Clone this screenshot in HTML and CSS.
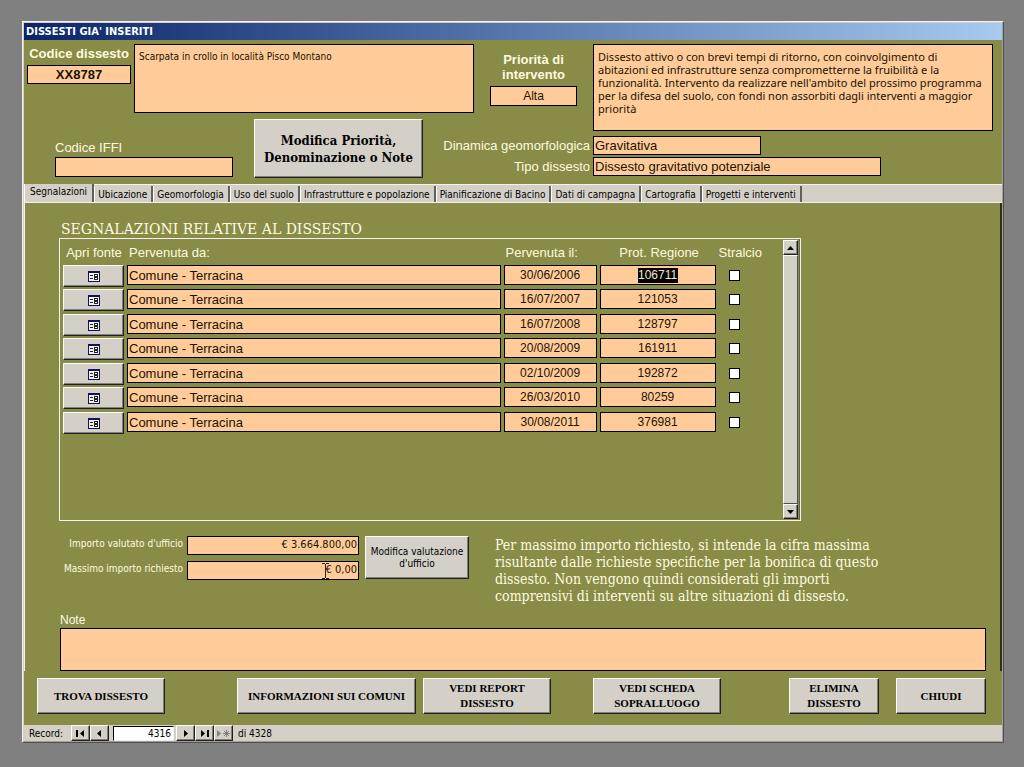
FILE: index.html
```html
<!DOCTYPE html>
<html lang="it">
<head>
<meta charset="utf-8">
<title>Dissesti già inseriti</title>
<link rel="stylesheet" href="styles.css">
</head>
<body>
<svg class="defs" aria-hidden="true">
  <symbol id="form-icon" viewBox="0 0 12 11">
    <path fill="#f4f2ec" d="M0 0h12v11H0z"/>
    <path fill="#101060" d="M0 0h12v2H0zM0 0h1v11H0zM11 0h1v11h-1zM0 10h12v1H0z"/>
    <path fill="#222" d="M2 4h3v1H2zM2 7h3v1H2zM6 3h4v3H6zM6 6h4v3H6z"/>
    <path fill="#fff" d="M7 4h2v1H7zM7 7h2v1H7z"/>
  </symbol>
</svg>
<main class="window">
  <h1 class="titlebar">DISSESTI GIA' INSERITI</h1>

  <section class="header">
    <div class="ident">
      <div class="code">
        <label class="strong-label" for="codice">Codice dissesto</label>
        <input class="field code-field" id="codice" value="XX8787">
      </div>
      <textarea class="field description" aria-label="Denominazione">Scarpata in crollo in località Pisco Montano</textarea>
    </div>
    <div class="priority">
      <label class="strong-label" for="priorita">Priorità di<br>intervento</label>
      <input class="field priority-field" id="priorita" value="Alta">
    </div>
    <textarea class="field priority-text" aria-label="Descrizione priorità">Dissesto attivo o con brevi tempi di ritorno, con coinvolgimento di
abitazioni ed infrastrutture senza comprometterne la fruibilità e la
funzionalità. Intervento da realizzare nell'ambito del prossimo programma
per la difesa del suolo, con fondi non assorbiti dagli interventi a maggior
priorità</textarea>
    <div class="iffi-row">
      <div class="iffi">
        <label class="label" for="iffi">Codice IFFI</label>
        <input class="field" id="iffi">
      </div>
      <button class="btn edit-main">Modifica Priorità,<br>Denominazione o Note</button>
    </div>
    <div class="types">
      <label class="label" for="dinamica">Dinamica geomorfologica</label>
      <input class="field dynamics" id="dinamica" value="Gravitativa">
      <label class="label" for="tipo">Tipo dissesto</label>
      <input class="field kind" id="tipo" value="Dissesto gravitativo potenziale">
    </div>
  </section>

  <nav class="tabs">
    <button class="tab active">Segnalazioni</button>
    <button class="tab">Ubicazione</button>
    <button class="tab">Geomorfologia</button>
    <button class="tab">Uso del suolo</button>
    <button class="tab">Infrastrutture e popolazione</button>
    <button class="tab">Pianificazione di Bacino</button>
    <button class="tab">Dati di campagna</button>
    <button class="tab">Cartografia</button>
    <button class="tab">Progetti e interventi</button>
  </nav>

  <section class="panel">
    <h2 class="heading">SEGNALAZIONI RELATIVE AL DISSESTO</h2>
    <div class="subform">
      <table class="reports">
        <colgroup><col class="c-open"><col class="c-from"><col class="c-date"><col class="c-prot"><col class="c-check"></colgroup>
        <thead>
          <tr><th class="center">Apri fonte</th><th class="inset">Pervenuta da:</th><th class="inset">Pervenuta il:</th><th class="center">Prot. Regione</th><th>Stralcio</th></tr>
        </thead>
        <tbody>
          <tr><td><button class="btn open" aria-label="Apri fonte"><svg class="form-icon"><use href="#form-icon"/></svg></button></td><td><input class="field" aria-label="Pervenuta da" value="Comune - Terracina"></td><td><input class="field num" aria-label="Pervenuta il" value="30/06/2006"></td><td><input class="field num selected" aria-label="Prot. Regione" value="106711"></td><td><input class="check" type="checkbox" aria-label="Stralcio"></td></tr>
          <tr><td><button class="btn open" aria-label="Apri fonte"><svg class="form-icon"><use href="#form-icon"/></svg></button></td><td><input class="field" aria-label="Pervenuta da" value="Comune - Terracina"></td><td><input class="field num" aria-label="Pervenuta il" value="16/07/2007"></td><td><input class="field num" aria-label="Prot. Regione" value="121053"></td><td><input class="check" type="checkbox" aria-label="Stralcio"></td></tr>
          <tr><td><button class="btn open" aria-label="Apri fonte"><svg class="form-icon"><use href="#form-icon"/></svg></button></td><td><input class="field" aria-label="Pervenuta da" value="Comune - Terracina"></td><td><input class="field num" aria-label="Pervenuta il" value="16/07/2008"></td><td><input class="field num" aria-label="Prot. Regione" value="128797"></td><td><input class="check" type="checkbox" aria-label="Stralcio"></td></tr>
          <tr><td><button class="btn open" aria-label="Apri fonte"><svg class="form-icon"><use href="#form-icon"/></svg></button></td><td><input class="field" aria-label="Pervenuta da" value="Comune - Terracina"></td><td><input class="field num" aria-label="Pervenuta il" value="20/08/2009"></td><td><input class="field num" aria-label="Prot. Regione" value="161911"></td><td><input class="check" type="checkbox" aria-label="Stralcio"></td></tr>
          <tr><td><button class="btn open" aria-label="Apri fonte"><svg class="form-icon"><use href="#form-icon"/></svg></button></td><td><input class="field" aria-label="Pervenuta da" value="Comune - Terracina"></td><td><input class="field num" aria-label="Pervenuta il" value="02/10/2009"></td><td><input class="field num" aria-label="Prot. Regione" value="192872"></td><td><input class="check" type="checkbox" aria-label="Stralcio"></td></tr>
          <tr><td><button class="btn open" aria-label="Apri fonte"><svg class="form-icon"><use href="#form-icon"/></svg></button></td><td><input class="field" aria-label="Pervenuta da" value="Comune - Terracina"></td><td><input class="field num" aria-label="Pervenuta il" value="26/03/2010"></td><td><input class="field num" aria-label="Prot. Regione" value="80259"></td><td><input class="check" type="checkbox" aria-label="Stralcio"></td></tr>
          <tr><td><button class="btn open" aria-label="Apri fonte"><svg class="form-icon"><use href="#form-icon"/></svg></button></td><td><input class="field" aria-label="Pervenuta da" value="Comune - Terracina"></td><td><input class="field num" aria-label="Pervenuta il" value="30/08/2011"></td><td><input class="field num" aria-label="Prot. Regione" value="376981"></td><td><input class="check" type="checkbox" aria-label="Stralcio"></td></tr>
        </tbody>
      </table>
      <div class="scrollbar">
        <button class="btn scroll-btn" aria-label="Su"><svg width="7" height="4" viewBox="0 0 7 4"><path d="M0 4L3.500 0 7 4z"/></svg></button>
        <div class="thumb"></div>
        <button class="btn scroll-btn" aria-label="Giù"><svg width="7" height="4" viewBox="0 0 7 4"><path d="M0 0h7L3.500 4z"/></svg></button>
      </div>
    </div>

    <div class="amounts">
      <div class="amount-grid">
        <label class="small-label" for="valutato">Importo valutato d'ufficio</label>
        <input class="field amount" id="valutato" value="€ 3.664.800,00">
        <label class="small-label" for="massimo">Massimo importo richiesto</label>
        <div class="amount-wrap">
          <input class="field amount" id="massimo" value="€ 0,00">
          <svg class="ibeam" width="7" height="16" viewBox="0 0 7 16"><path d="M0 .5h3M4 .5h3M3.500 1v14M0 15.500h3M4 15.500h3" stroke="#223" fill="none"/></svg>
        </div>
      </div>
      <button class="btn edit-amount">Modifica valutazione<br>d'ufficio</button>
      <p class="hint">Per massimo importo richiesto, si intende la cifra massima<br>risultante dalle richieste specifiche per la bonifica di questo<br>dissesto. Non vengono quindi considerati gli importi<br>comprensivi di interventi su altre situazioni di dissesto.</p>
    </div>

    <div class="notes">
      <label class="note-label" for="note">Note</label>
      <textarea class="field note-field" id="note"></textarea>
    </div>
  </section>

  <footer class="actions">
    <button class="btn action wide find">TROVA DISSESTO</button>
    <button class="btn action info">INFORMAZIONI SUI COMUNI</button>
    <button class="btn action wide report">VEDI REPORT<br>DISSESTO</button>
    <button class="btn action wide survey">VEDI SCHEDA<br>SOPRALLUOGO</button>
    <button class="btn action remove">ELIMINA<br>DISSESTO</button>
    <button class="btn action close">CHIUDI</button>
  </footer>

  <div class="records">
    <label class="record-label" for="record">Record:</label>
    <button class="btn rec" aria-label="Primo"><svg width="9" height="7" viewBox="0 0 9 7"><path d="M0 0h2v7H0zM8 0v7L4 3.500z"/></svg></button>
    <button class="btn rec" aria-label="Precedente"><svg width="9" height="7" viewBox="0 0 9 7"><path d="M6 0v7L2 3.500z"/></svg></button>
    <input class="record-field" id="record" value="4316">
    <button class="btn rec" aria-label="Successivo"><svg width="9" height="7" viewBox="0 0 9 7"><path d="M3 0v7l4-3.500z"/></svg></button>
    <button class="btn rec" aria-label="Ultimo"><svg width="9" height="7" viewBox="0 0 9 7"><path d="M1 0v7l4-3.500zM7 0h2v7H7z"/></svg></button>
    <button class="btn rec" aria-label="Nuovo" disabled><svg width="13" height="7" viewBox="0 0 13 7"><path fill="#808080" d="M0 0v7l4-3.500z"/><path stroke="#808080" d="M9.500 0v7M6 3.500h7M7 1l5 5M12 1L7 6"/></svg></button>
    <span class="record-total">di 4328</span>
  </div>
</main>
</body>
</html>
```
FILE: styles.css
```css
:root {
  --olive: #888c46;
  --peach: #ffcc99;
  --face: #d4d0c8;
  --cream: #fffbe0;
  --ui: "DejaVu Sans Condensed", "DejaVu Sans", sans-serif;
  --sans: "Liberation Sans", Arial, sans-serif;
  --serif: "DejaVu Serif Condensed", "DejaVu Serif", serif;
}

* { box-sizing: border-box; }

body {
  margin: 0;
  padding: 21px 20px 24px 22px;
  background: #808080;
  font: 10px/13px var(--ui);
  color: #000;
}

.defs { position: absolute; width: 0; height: 0; }

.window {
  display: flex;
  flex-direction: column;
  border: 1px solid #f4f2ec;
  border-right-color: #505050;
  border-bottom-color: #505050;
  box-shadow: inset -1px -1px 0 #a0a098;
  padding: 1px;
  background: var(--face);
}

.titlebar {
  margin: 0;
  padding: 1px 2px 0;
  height: 17px;
  background: linear-gradient(90deg, #0a246a, #a6caf0);
  color: #fff;
  font: bold 11px/15px var(--ui);
}

.field {
  display: block;
  width: 100%;
  height: 20px;
  margin: 0;
  padding: 0 1px;
  border: 1px solid #000;
  border-radius: 0;
  outline: 0;
  resize: none;
  overflow: hidden;
  background: var(--peach);
  color: #1c1204;
  font: 13px/16px var(--sans);
}

.btn {
  display: flex;
  align-items: center;
  justify-content: center;
  margin: 0;
  padding: 0;
  border: 1px solid #fffef4;
  border-right-color: #202020;
  border-bottom-color: #202020;
  border-radius: 0;
  box-shadow: inset -1px -1px 0 #808080;
  background: var(--face);
  color: #000;
  text-align: center;
}

.label, .reports th {
  color: var(--cream);
  font: 13px/16px var(--sans);
}

.strong-label {
  color: var(--cream);
  font: bold 13px/15px var(--sans);
  text-align: center;
  white-space: nowrap;
}

/* Header */
.header {
  display: grid;
  grid-template-columns: 417px 30px 119px minmax(0, 1fr);
  grid-template-rows: 75px 17px auto;
  padding: 4px 9px 6px 3px;
  background: var(--olive);
}

.ident { grid-area: 1 / 1 / 2 / 3; display: flex; gap: 3px; }
.code { display: flex; flex-direction: column; gap: 4px; width: 104px; padding-top: 2px; }
.code-field { height: 19px; font-weight: bold; text-align: center; }
.description { flex: 1; width: auto; height: 69px; padding: 5px 4px; font: 10px/13px var(--ui); }
.priority { grid-area: 1 / 3 / 3 / 4; display: flex; flex-direction: column; align-items: center; gap: 4px; padding: 8px 0 0; }
.priority-field { width: 87px; font: 12px/16px var(--sans); text-align: center; }
.priority-text { grid-area: 1 / 4 / 3 / 5; height: 87px; padding: 5px 4px; font: 11px/13px "Noto Sans", sans-serif; }
.iffi-row { grid-area: 2 / 1 / 4 / 2; display: flex; gap: 21px; padding-left: 28px; }
.iffi { display: flex; flex-direction: column; gap: 1px; width: 178px; padding-top: 21px; }
.edit-main { width: 169px; height: 59px; font: bold 13px/17px var(--serif); }
.types { grid-area: 3 / 2 / 4 / 5; display: grid; grid-template-columns: 146px minmax(0, 1fr); gap: 2px 3px; align-content: start; align-items: center; justify-items: end; white-space: nowrap; }
.types .field { justify-self: start; height: 19px; }
.types .dynamics { width: 42%; }
.types .kind { width: 72%; }

/* Tabs */
.tabs {
  display: flex;
  align-items: flex-end;
  height: 19px;
  border-top: 1px solid #f4f2ec;
  border-bottom: 1px solid #f4f2ec;
  background: var(--face);
}

.tab {
  height: 16px;
  margin: 0;
  padding: 0 4px 0 3px;
  border: 0;
  border-left: 1px solid #fff;
  border-right: 2px solid #606060;
  background: var(--face);
  font: 10px/13px var(--ui);
  white-space: nowrap;
}

.tab.active { height: 18px; padding: 0 5px 3px; }

/* Panel */
.panel {
  padding: 18px 14px 0 34px;
  border-left: 1px solid #f4f2ec;
  border-right: 2px solid #303018;
  background: var(--olive);
}

.heading { margin: 0; padding-left: 2px; color: var(--cream); font: 14px/17px "DejaVu Serif", serif; }

.subform {
  display: flex;
  width: 80%;
  height: 283px;
  border: 1px solid #f4f2ec;
  box-shadow: inset -1px 0 0 #606060;
  padding: 1px;
}

.reports { flex: 1; table-layout: fixed; border-collapse: collapse; align-self: flex-start; }
.reports th { height: 25px; padding: 5px 0 0; font-weight: normal; text-align: left; vertical-align: top; white-space: nowrap; }
.reports th.center { text-align: center; }
.reports th.inset { padding-left: 2px; }
.reports td { height: 24px; padding: 0 3px 0 0; vertical-align: top; }
.reports tr:nth-child(even) td { height: 25px; }
.c-open { width: 66px; }
.c-date { width: 96px; }
.c-prot { width: 119px; }
.c-check { width: 64px; }
.reports td:first-child { padding: 0 3px 0 2px; }
.open { width: 61px; height: 22px; }
.form-icon { width: 12px; height: 11px; }
.num { font-size: 12px; text-align: center; }
.selected { background: linear-gradient(#000, #000) center / 40px 15px no-repeat var(--peach); color: #f4e8d0; }

.check {
  appearance: none;
  display: block;
  width: 11px;
  height: 11px;
  margin: 5px 0 0 10px;
  border: 1px solid #000;
  background: #fff;
}

.scrollbar { display: flex; flex-direction: column; width: 15px; margin-right: 1px; }
.scroll-btn { height: 15px; }
.thumb { flex: 1; border: 1px solid #fff; border-right-color: #505050; border-bottom-color: #505050; background: var(--face); }

.amounts { display: flex; align-items: flex-start; padding-top: 15px; }
.amount-grid { display: grid; grid-template-columns: 124px 172px; gap: 6px 4px; text-align: right; }
.small-label { color: var(--cream); font: 10px/15px var(--ui); white-space: nowrap; }
.amount { height: 19px; padding: 0 1px 2px; font: 11px/14px var(--ui); text-align: right; }
.amount-wrap { position: relative; }
.ibeam { position: absolute; right: 30px; top: 2px; }
.edit-amount { width: 104px; height: 43px; margin-left: 6px; font: 10px/12px var(--ui); white-space: nowrap; }
.hint { margin: 1px 0 0 26px; color: var(--cream); font: 14px/17px var(--serif); white-space: nowrap; }

.notes { padding: 8px 0 0 1px; }
.note-label { display: block; color: var(--cream); font: 12px/15px var(--sans); }
.note-field { height: 43px; }

/* Footer */
.actions {
  display: flex;
  padding: 7px 16px 11px 13px;
  background: var(--olive);
}

.action { height: 36px; width: 90px; font: bold 11px/15px "Liberation Serif", serif; white-space: nowrap; }
.wide { width: 128px; }
.info { width: 179px; margin-left: 72px; }
.report { margin-left: 7px; }
.survey { margin-left: 42px; }
.remove { margin-left: auto; }
.close { margin-left: 17px; }

.records { display: flex; align-items: center; height: 16px; padding-left: 5px; background: var(--face); }
.record-label { width: 42px; }
.rec { width: 19px; height: 16px; }
.record-field { width: 61px; height: 15px; margin: 0 2px 0 4px; padding: 0 2px; border: 1px solid #000; border-right-color: #eee; border-bottom-color: #eee; background: #fff; font: 10px/13px var(--ui); text-align: right; }
.record-total { margin-left: 5px; font: 10px/13px var(--ui); }
```
